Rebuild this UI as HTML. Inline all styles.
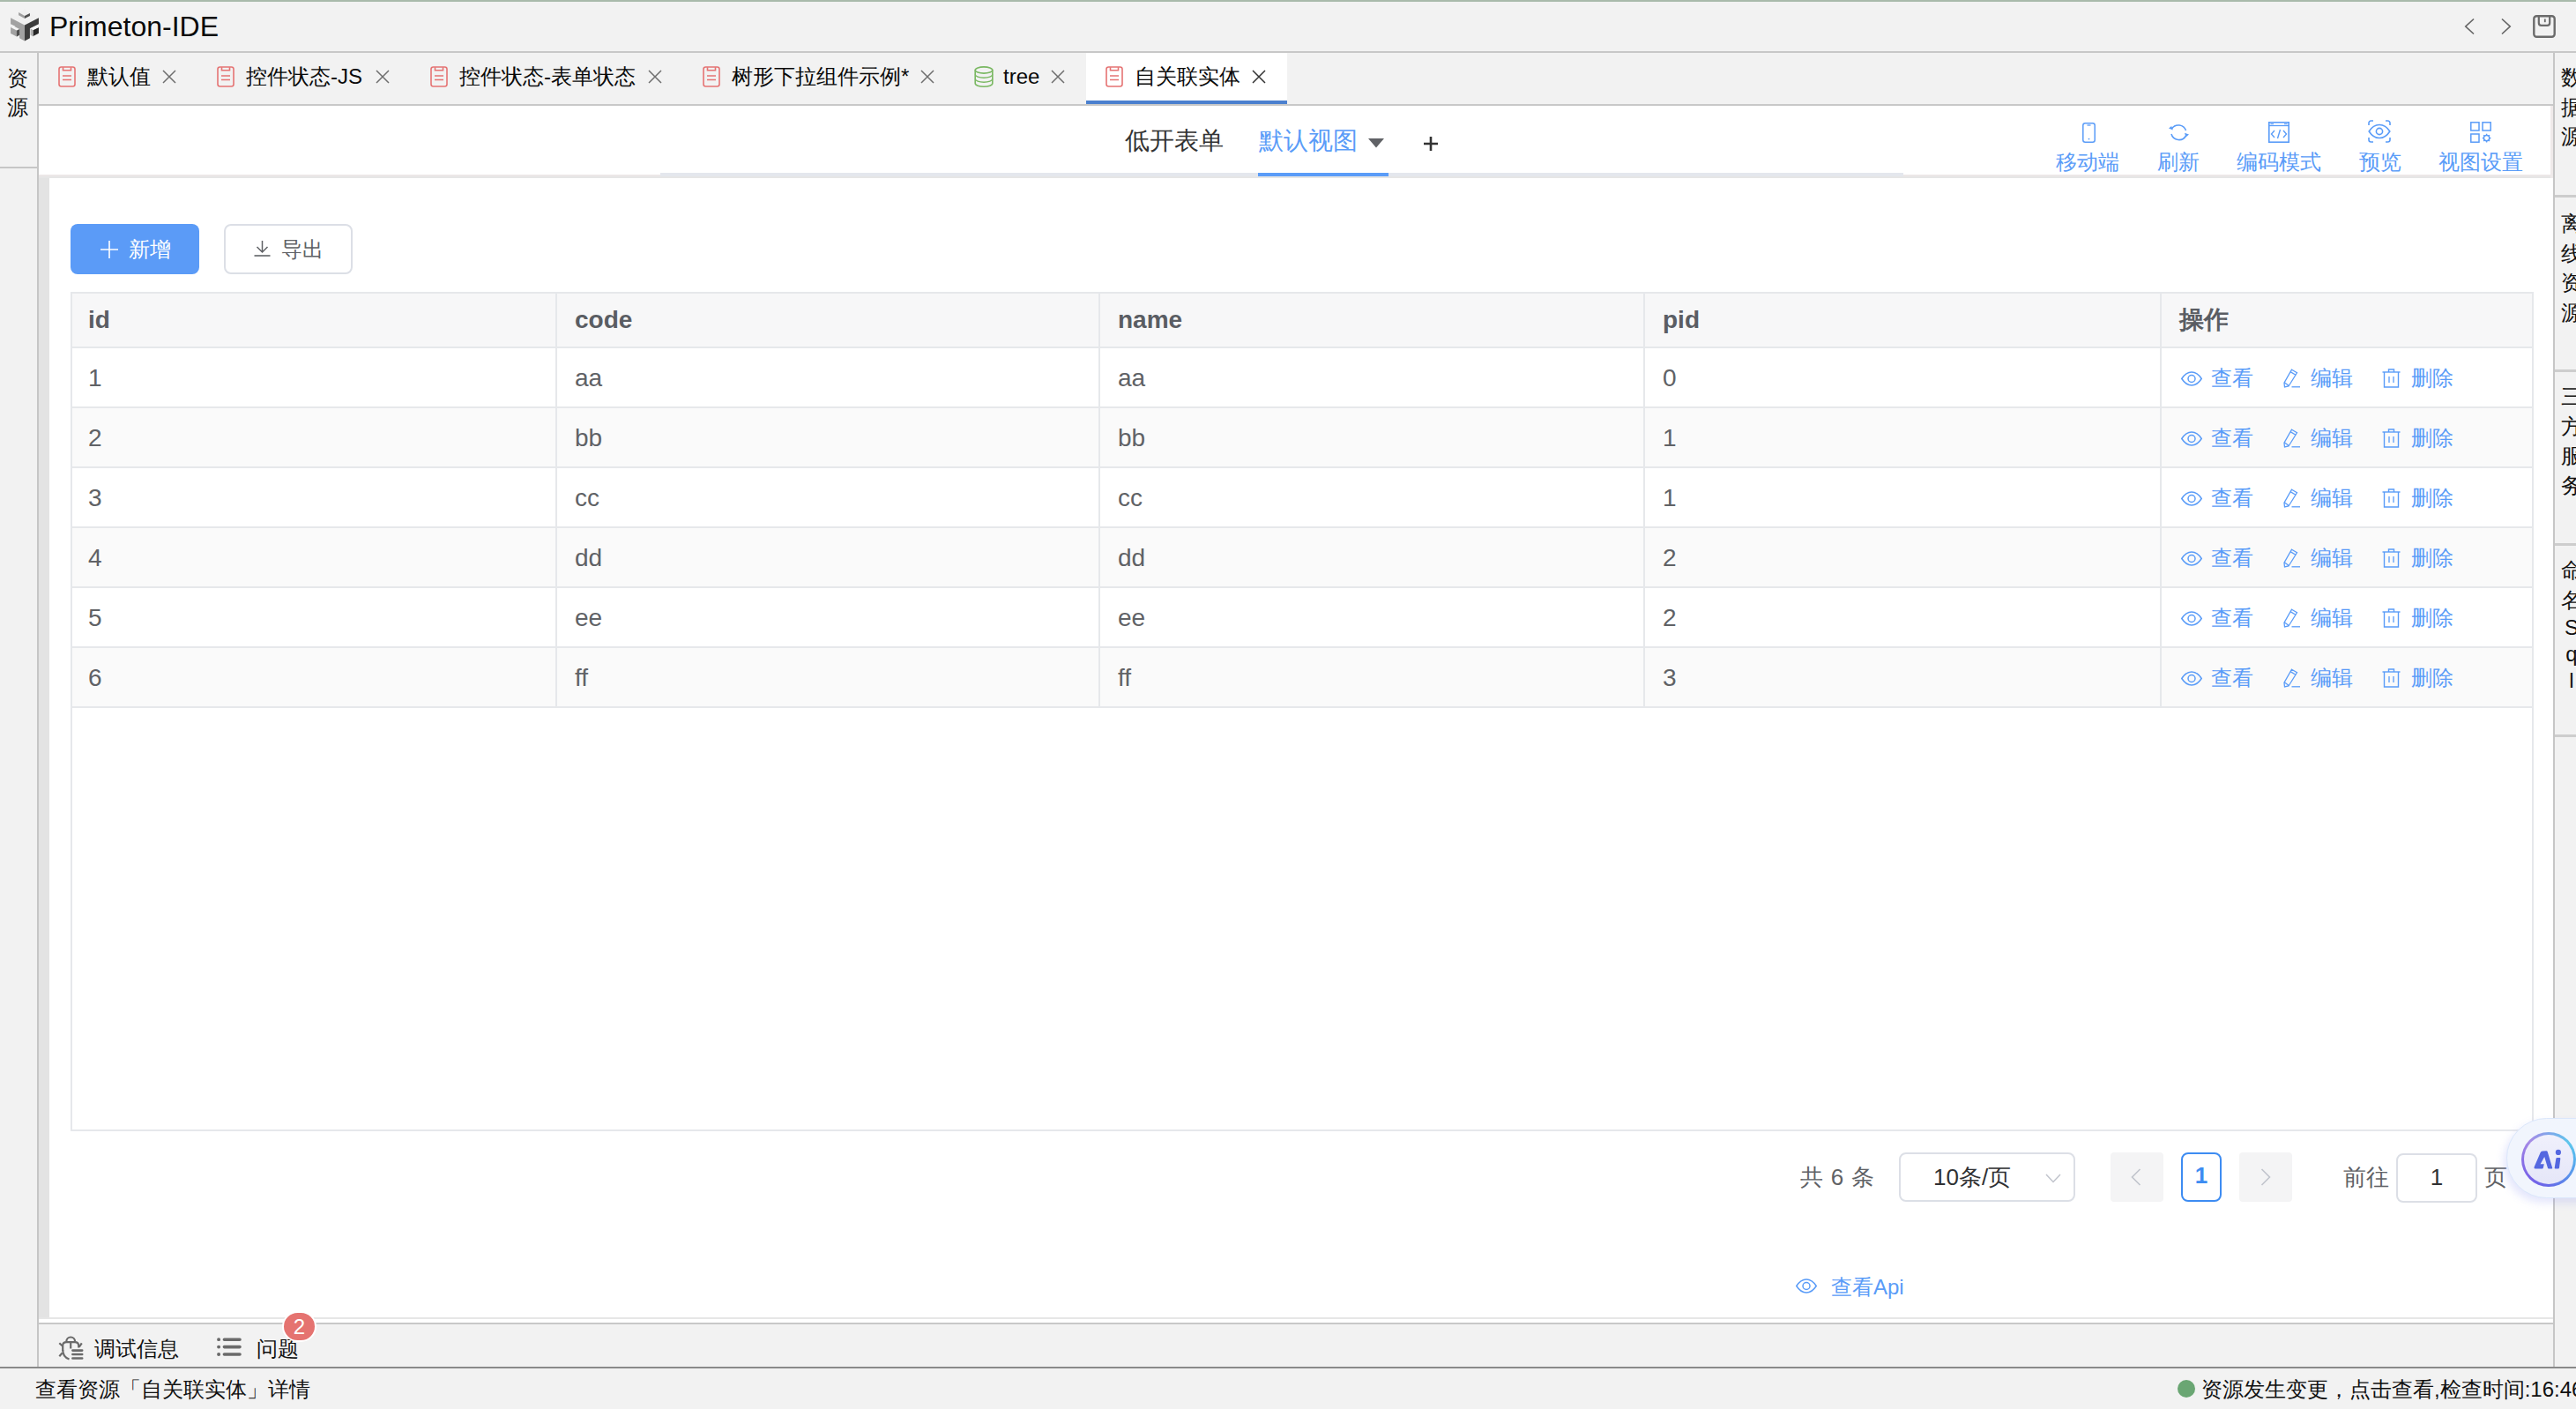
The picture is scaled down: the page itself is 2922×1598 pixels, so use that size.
<!DOCTYPE html>
<html><head><meta charset="utf-8">
<style>
*{box-sizing:border-box;margin:0;padding:0}
html,body{width:2922px;height:1598px;overflow:hidden;background:#f2f2f2}
body{font-family:"Liberation Sans",sans-serif;position:relative;color:#000}
.a{position:absolute;white-space:nowrap}
svg{display:block}
/* title bar */
#topline{left:0;top:0;width:2922px;height:2px;background:#a9baab}
#title{left:0;top:2px;width:2922px;height:56px;background:#f2f2f2}
#titleborder{left:0;top:58px;width:2922px;height:2px;background:#c8c8c8}
#apptitle{left:56px;top:13px;font-size:32px;line-height:34px;color:#0a0a0a}
/* sidebars */
#lsb{left:0;top:60px;width:42px;height:1490px;background:#f2f2f2}
#lsbb{left:42px;top:60px;width:2px;height:1490px;background:#c6c6c6}
.vt{font-size:24px;line-height:33px;color:#111;white-space:normal;width:26px}
#rsbb{left:2896px;top:60px;width:2px;height:1490px;background:#c6c6c6}
.rsep{left:2898px;width:24px;height:3px;background:#cdcdcd}
/* tabs */
#tabbar{left:44px;top:60px;width:2852px;height:58px;background:#f2f2f2}
#tabbarb{left:44px;top:118px;width:2852px;height:2px;background:#c8c8c8}
.tab{top:60px;height:58px}
.tab .ti{position:absolute;top:15px}
.tab .tt{position:absolute;top:14px;font-size:24px;line-height:30px;color:#0a0a0a}
.tab .tx{position:absolute;top:19px}
#acttab{left:1232px;top:60px;width:228px;height:58px;background:#fff}
#acttabu{left:1232px;top:114px;width:228px;height:4px;background:#4b80cf}
/* header */
#hdr{left:44px;top:120px;width:2852px;height:82px;background:#fff}
#hdrline{left:44px;top:198px;width:2850px;height:4px;background:#e6e6e6;border-top:2px solid #ece7e7}
#hdrrb{left:2893px;top:120px;width:3px;height:82px;background:#efeaea}
#navline{left:749px;top:196px;width:1410px;height:4px;background:#e4e7ed}
#navact{left:1427px;top:196px;width:148px;height:4px;background:#5a9cf8}
.st{font-size:28px;line-height:32px}
.tbl{font-size:24px;line-height:28px;color:#5a9cf8}
/* content */
#strip{left:44px;top:202px;width:12px;height:1292px;background:#e3e3e3}
#content{left:56px;top:202px;width:2840px;height:1292px;background:#fff}
#cbot{left:44px;top:1494px;width:2852px;height:6px;background:#fff;border-top:2px solid #e6e6e6}
#cbot2{left:44px;top:1496px;width:2852px;height:2px;background:#fafafa}
/* buttons */
#btnadd{left:80px;top:254px;width:146px;height:57px;background:#5b9bf7;border-radius:8px}
#btnexp{left:254px;top:254px;width:146px;height:57px;background:#fff;border:2px solid #dcdfe6;border-radius:8px}
.btxt{font-size:24px;line-height:28px}
/* table */
#table{left:80px;top:331px;width:2794px;height:952px;border:2px solid #e6e8eb;background:#fff}
.row{position:absolute;left:0;width:2790px;height:68px;border-bottom:2px solid #e6e8eb}
.hrow{height:62px;background:#f7f7f8}
.even{background:#fafafa}
.cell{position:absolute;top:0;height:100%}
.cd{position:absolute;top:0;width:2px;height:100%;background:#e6e8eb}
.ct{position:absolute;font-size:28px;line-height:32px;color:#606266}
.th{font-weight:bold;color:#5a5d63}
.act{position:absolute;font-size:24px;line-height:28px;color:#5a9cf8}
/* pagination */
.pg{font-size:26px;line-height:30px;color:#606266}
/* bottom */
#bpb{left:44px;top:1500px;width:2852px;height:2px;background:#c8c8c8}
#bp{left:44px;top:1502px;width:2852px;height:48px;background:#f2f2f2}
#sbb{left:0;top:1550px;width:2922px;height:2px;background:#8a8a8a}
#sb{left:0;top:1552px;width:2922px;height:46px;background:#f2f2f2}
</style></head><body>
<div class="a" id="topline"></div>
<div class="a" id="title"></div>
<div class="a" id="titleborder"></div>
<div class="a" id="apptitle">Primeton-IDE</div>

<div class="a" id="lsb"></div>
<div class="a" id="lsbb"></div>
<div class="a" id="rsbb"></div>


<!-- logo -->
<div class="a" style="left:8px;top:8px;width:44px;height:44px">
<svg width="44" height="44" viewBox="0 0 1409 1409">
<polygon points="130,390 640,120 1150,390 640,660" fill="#f0f0f0"/>
<polygon points="130,390 640,660 640,1230 450,1130 450,1020 350,1075 130,960 130,740 300,700 130,620" fill="#a2a2a2"/>
<polygon points="350,850 450,800 450,1020 350,1075" fill="#505050"/>
<polygon points="130,740 240,690 450,800 350,850" fill="#f5f5f5"/>
<polygon points="640,660 1150,390 1150,620 830,780 830,1130 640,1230" fill="#3c3c3c"/>
<polygon points="850,780 950,830 950,1075 850,1020" fill="#b0b0b0"/>
<polygon points="950,830 1150,740 1150,950 950,1060" fill="#262626"/>
<polygon points="850,780 1050,690 1150,740 950,830" fill="#f7f7f7"/>
<polygon points="420,195 640,90 830,225 640,320" fill="#efefef"/>
<polygon points="420,195 640,320 640,420 420,300" fill="#9e9e9e"/>
<polygon points="640,320 830,225 830,320 640,420" fill="#4e4e4e"/>
</svg></div>
<!-- title right icons -->
<div class="a" style="left:2795px;top:20px"><svg width="12" height="20" viewBox="0 0 12 20"><path d="M11 1.5 L1.8 10 L11 18.5" fill="none" stroke="#666" stroke-width="1.7"/></svg></div>
<div class="a" style="left:2837px;top:20px"><svg width="12" height="20" viewBox="0 0 12 20"><path d="M1 1.5 L10.2 10 L1 18.5" fill="none" stroke="#666" stroke-width="1.7"/></svg></div>
<div class="a" style="left:2873px;top:17px"><svg width="26" height="26" viewBox="0 0 26 26"><rect x="1.3" y="1.3" width="23.4" height="23.4" rx="3" fill="none" stroke="#6b6b6b" stroke-width="2.4"/><path d="M6.8 1.5 V9 Q6.8 11.8 9.6 11.8 H16.4 Q19.2 11.8 19.2 9 V1.5" fill="none" stroke="#6b6b6b" stroke-width="2.2"/><path d="M13.8 4.5 V8.2" stroke="#6b6b6b" stroke-width="1.8"/></svg></div>

<!-- left sidebar text -->
<div class="a vt" style="left:8px;top:72px">资<br>源</div>
<div class="a" style="left:0;top:189px;width:42px;height:2px;background:#c6c6c6"></div>

<!-- right sidebar -->
<div class="a" style="left:2898px;top:60px;width:24px;height:1490px;background:#f2f2f2;overflow:hidden"><div class="a" style="left:7px;top:11px;width:26px"><div style="height:33.5px;line-height:33.5px;font-size:24px;color:#111;text-align:left;width:24px">数</div><div style="height:33.5px;line-height:33.5px;font-size:24px;color:#111;text-align:left;width:24px">据</div><div style="height:33.5px;line-height:33.5px;font-size:24px;color:#111;text-align:left;width:24px">源</div></div><div class="a" style="left:0;top:161px;width:24px;height:3px;background:#cdcdcd"></div><div class="a" style="left:7px;top:177px;width:26px"><div style="height:33.5px;line-height:33.5px;font-size:24px;color:#111;text-align:left;width:24px">离</div><div style="height:33.5px;line-height:33.5px;font-size:24px;color:#111;text-align:left;width:24px">线</div><div style="height:33.5px;line-height:33.5px;font-size:24px;color:#111;text-align:left;width:24px">资</div><div style="height:33.5px;line-height:33.5px;font-size:24px;color:#111;text-align:left;width:24px">源</div></div><div class="a" style="left:0;top:359px;width:24px;height:3px;background:#cdcdcd"></div><div class="a" style="left:7px;top:373px;width:26px"><div style="height:33.5px;line-height:33.5px;font-size:24px;color:#111;text-align:left;width:24px">三</div><div style="height:33.5px;line-height:33.5px;font-size:24px;color:#111;text-align:left;width:24px">方</div><div style="height:33.5px;line-height:33.5px;font-size:24px;color:#111;text-align:left;width:24px">服</div><div style="height:33.5px;line-height:33.5px;font-size:24px;color:#111;text-align:left;width:24px">务</div></div><div class="a" style="left:0;top:556px;width:24px;height:3px;background:#cdcdcd"></div><div class="a" style="left:7px;top:570px;width:26px"><div style="height:33.5px;line-height:33.5px;font-size:24px;color:#111;text-align:left;width:24px">命</div><div style="height:33.5px;line-height:33.5px;font-size:24px;color:#111;text-align:left;width:24px">名</div><div style="height:30px;line-height:30px;font-size:24px;color:#111;text-align:center;width:24px">S</div><div style="height:30px;line-height:30px;font-size:24px;color:#111;text-align:center;width:24px">q</div><div style="height:30px;line-height:30px;font-size:24px;color:#111;text-align:center;width:24px">l</div></div><div class="a" style="left:0;top:773px;width:24px;height:3px;background:#cdcdcd"></div></div>
<div class="a" id="tabbar"></div>
<div class="a" id="tabbarb"></div>

<div class="a" id="acttab"></div><div class="a" id="acttabu"></div>
<div class="a" style="left:66px;top:75px"><svg width="20" height="24" viewBox="0 0 20 24"><rect x="1" y="1" width="18" height="22" rx="2.5" fill="none" stroke="#e57373" stroke-width="1.6"/><path d="M5.5 1.2 V4.8 H14.5 V1.2" fill="none" stroke="#e57373" stroke-width="1.6"/><path d="M5 11 H15 M5 15.5 H15" stroke="#e57373" stroke-width="1.6"/></svg></div><div class="a tt" style="left:99px;top:72px;font-size:24px;line-height:30px;color:#0a0a0a">默认值</div><div class="a" style="left:184px;top:79px"><svg width="16" height="16" viewBox="0 0 16 16"><path d="M1 1 L15 15 M15 1 L1 15" stroke="#6e6e6e" stroke-width="1.5"/></svg></div>
<div class="a" style="left:246px;top:75px"><svg width="20" height="24" viewBox="0 0 20 24"><rect x="1" y="1" width="18" height="22" rx="2.5" fill="none" stroke="#e57373" stroke-width="1.6"/><path d="M5.5 1.2 V4.8 H14.5 V1.2" fill="none" stroke="#e57373" stroke-width="1.6"/><path d="M5 11 H15 M5 15.5 H15" stroke="#e57373" stroke-width="1.6"/></svg></div><div class="a tt" style="left:279px;top:72px;font-size:24px;line-height:30px;color:#0a0a0a">控件状态-JS</div><div class="a" style="left:426px;top:79px"><svg width="16" height="16" viewBox="0 0 16 16"><path d="M1 1 L15 15 M15 1 L1 15" stroke="#6e6e6e" stroke-width="1.5"/></svg></div>
<div class="a" style="left:488px;top:75px"><svg width="20" height="24" viewBox="0 0 20 24"><rect x="1" y="1" width="18" height="22" rx="2.5" fill="none" stroke="#e57373" stroke-width="1.6"/><path d="M5.5 1.2 V4.8 H14.5 V1.2" fill="none" stroke="#e57373" stroke-width="1.6"/><path d="M5 11 H15 M5 15.5 H15" stroke="#e57373" stroke-width="1.6"/></svg></div><div class="a tt" style="left:521px;top:72px;font-size:24px;line-height:30px;color:#0a0a0a">控件状态-表单状态</div><div class="a" style="left:735px;top:79px"><svg width="16" height="16" viewBox="0 0 16 16"><path d="M1 1 L15 15 M15 1 L1 15" stroke="#6e6e6e" stroke-width="1.5"/></svg></div>
<div class="a" style="left:797px;top:75px"><svg width="20" height="24" viewBox="0 0 20 24"><rect x="1" y="1" width="18" height="22" rx="2.5" fill="none" stroke="#e57373" stroke-width="1.6"/><path d="M5.5 1.2 V4.8 H14.5 V1.2" fill="none" stroke="#e57373" stroke-width="1.6"/><path d="M5 11 H15 M5 15.5 H15" stroke="#e57373" stroke-width="1.6"/></svg></div><div class="a tt" style="left:830px;top:72px;font-size:24px;line-height:30px;color:#0a0a0a">树形下拉组件示例*</div><div class="a" style="left:1044px;top:79px"><svg width="16" height="16" viewBox="0 0 16 16"><path d="M1 1 L15 15 M15 1 L1 15" stroke="#6e6e6e" stroke-width="1.5"/></svg></div>
<div class="a" style="left:1105px;top:75px"><svg width="22" height="24" viewBox="0 0 22 24"><ellipse cx="11" cy="4.5" rx="9.8" ry="3.6" fill="none" stroke="#7ab862" stroke-width="1.6"/><path d="M1.2 4.5 V19.5 C1.2 21.6 5.6 23.2 11 23.2 C16.4 23.2 20.8 21.6 20.8 19.5 V4.5" fill="none" stroke="#7ab862" stroke-width="1.6"/><path d="M1.2 9.5 C1.2 11.6 5.6 13.2 11 13.2 C16.4 13.2 20.8 11.6 20.8 9.5 M1.2 14.5 C1.2 16.6 5.6 18.2 11 18.2 C16.4 18.2 20.8 16.6 20.8 14.5" fill="none" stroke="#7ab862" stroke-width="1.4"/></svg></div><div class="a tt" style="left:1138px;top:72px;font-size:24px;line-height:30px;color:#0a0a0a">tree</div><div class="a" style="left:1192px;top:79px"><svg width="16" height="16" viewBox="0 0 16 16"><path d="M1 1 L15 15 M15 1 L1 15" stroke="#6e6e6e" stroke-width="1.5"/></svg></div>
<div class="a" style="left:1254px;top:75px"><svg width="20" height="24" viewBox="0 0 20 24"><rect x="1" y="1" width="18" height="22" rx="2.5" fill="none" stroke="#e57373" stroke-width="1.6"/><path d="M5.5 1.2 V4.8 H14.5 V1.2" fill="none" stroke="#e57373" stroke-width="1.6"/><path d="M5 11 H15 M5 15.5 H15" stroke="#e57373" stroke-width="1.6"/></svg></div><div class="a tt" style="left:1287px;top:72px;font-size:24px;line-height:30px;color:#0a0a0a">自关联实体</div><div class="a" style="left:1420px;top:79px"><svg width="16" height="16" viewBox="0 0 16 16"><path d="M1 1 L15 15 M15 1 L1 15" stroke="#333" stroke-width="1.5"/></svg></div>
<div class="a" id="hdr"></div>
<div class="a" id="hdrline"></div>
<div class="a" id="hdrrb"></div>
<div class="a" id="navline"></div>
<div class="a" id="navact"></div>
<div class="a st" style="left:1276px;top:144px;color:#333">低开表单</div>
<div class="a st" style="left:1428px;top:144px;color:#5a9cf8">默认视图</div>
<div class="a" style="left:1552px;top:157px"><svg width="18" height="11" viewBox="0 0 18 11"><path d="M0 0 H18 L9 10.5 Z" fill="#606266"/></svg></div>
<div class="a" style="left:1615px;top:155px"><svg width="16" height="16" viewBox="0 0 16 16"><path d="M8 0 V16 M0 8 H16" stroke="#333" stroke-width="2.6"/></svg></div>

<!-- toolbar -->
<div class="a" style="left:2362px;top:139px"><svg width="15" height="23" viewBox="0 0 15 23"><rect x="0.8" y="0.8" width="13.4" height="21.4" rx="2.5" fill="none" stroke="#5a9cf8" stroke-width="1.5"/><path d="M5.5 3 H9.5" stroke="#5a9cf8" stroke-width="1.3"/><circle cx="7.5" cy="18.6" r="0.9" fill="#5a9cf8"/></svg></div>
<div class="a tbl" style="left:2332px;top:170px">移动端</div>
<div class="a" style="left:2459px;top:140px"><svg width="25" height="21" viewBox="0 0 25 21"><path d="M4.5 6 A9 9 0 0 1 20.5 8" fill="none" stroke="#5a9cf8" stroke-width="1.6"/><path d="M20.5 14 A9 9 0 0 1 4 12" fill="none" stroke="#5a9cf8" stroke-width="1.6"/><path d="M1 5.5 L4.2 3 L5.8 7.5 Z" fill="#5a9cf8"/><path d="M24 12.5 L20.5 15.5 L19 10.8 Z" fill="#5a9cf8"/></svg></div>
<div class="a tbl" style="left:2447px;top:170px">刷新</div>
<div class="a" style="left:2573px;top:138px"><svg width="24" height="24" viewBox="0 0 24 24"><rect x="0.8" y="0.8" width="22.4" height="22.4" fill="none" stroke="#5a9cf8" stroke-width="1.6"/><path d="M0.8 4.5 H23.2" stroke="#5a9cf8" stroke-width="1.3"/><path d="M2.5 2.6 H6 M18 2.6 H21.5" stroke="#5a9cf8" stroke-width="1"/><path d="M7 10 L3.5 14 L7 18 M17 10 L20.5 14 L17 18 M13.5 9 L10.5 19" fill="none" stroke="#5a9cf8" stroke-width="1.4"/></svg></div>
<div class="a tbl" style="left:2537px;top:170px">编码模式</div>
<div class="a" style="left:2686px;top:136px"><svg width="26" height="26" viewBox="0 0 26 26"><path d="M1 6 V3.5 A2.5 2.5 0 0 1 3.5 1 H6 M20 1 H22.5 A2.5 2.5 0 0 1 25 3.5 V6 M25 20 V22.5 A2.5 2.5 0 0 1 22.5 25 H20 M6 25 H3.5 A2.5 2.5 0 0 1 1 22.5 V20" fill="none" stroke="#5a9cf8" stroke-width="1.6"/><path d="M1.2 13 C5 7 9 5.5 13 5.5 C17 5.5 21 7 24.8 13 C21 19 17 20.5 13 20.5 C9 20.5 5 19 1.2 13 Z" fill="none" stroke="#5a9cf8" stroke-width="1.6"/><circle cx="13" cy="13" r="3.6" fill="none" stroke="#5a9cf8" stroke-width="1.6"/></svg></div>
<div class="a tbl" style="left:2676px;top:170px">预览</div>
<div class="a" style="left:2802px;top:138px"><svg width="24" height="24" viewBox="0 0 24 24"><rect x="0.8" y="0.8" width="9.2" height="9.2" fill="none" stroke="#5a9cf8" stroke-width="1.5"/><rect x="14" y="0.8" width="9.2" height="9.2" fill="none" stroke="#5a9cf8" stroke-width="1.5"/><rect x="0.8" y="14" width="9.2" height="9.2" fill="none" stroke="#5a9cf8" stroke-width="1.5"/><circle cx="18.6" cy="18.6" r="3.2" fill="none" stroke="#5a9cf8" stroke-width="1.5"/><path d="M18.6 13.8 V15.2 M18.6 22 V23.4 M13.8 18.6 H15.2 M22 18.6 H23.4 M15.2 15.2 L16.2 16.2 M21 21 L22 22 M22 15.2 L21 16.2 M16.2 21 L15.2 22" stroke="#5a9cf8" stroke-width="1.4"/></svg></div>
<div class="a tbl" style="left:2766px;top:170px">视图设置</div>

<div class="a" id="strip"></div>
<div class="a" id="content"></div>
<div class="a" id="cbot"></div>
<div class="a" id="btnadd"></div>
<div class="a" style="left:114px;top:273px"><svg width="20" height="20" viewBox="0 0 20 20"><path d="M10 0 V20 M0 10 H20" stroke="#fff" stroke-width="1.6"/></svg></div>
<div class="a btxt" style="left:146px;top:269px;color:#fff">新增</div>
<div class="a" id="btnexp"></div>
<div class="a" style="left:288px;top:273px"><svg width="19" height="18" viewBox="0 0 19 18"><path d="M9.5 0 V12.5 M3.5 7 L9.5 13 L15.5 7" fill="none" stroke="#606266" stroke-width="1.5"/><path d="M0.5 17 H18.5" stroke="#606266" stroke-width="1.6"/></svg></div>
<div class="a btxt" style="left:319px;top:269px;color:#606266">导出</div>
<div class="a" id="table"><div class="row hrow" style="top:0px;height:62px"><div class="cd" style="left:548px"></div><div class="cd" style="left:1164px"></div><div class="cd" style="left:1782px"></div><div class="cd" style="left:2368px"></div><div class="ct th" style="left:18px;top:14px">id</div><div class="ct th" style="left:570px;top:14px">code</div><div class="ct th" style="left:1186px;top:14px">name</div><div class="ct th" style="left:1804px;top:14px">pid</div><div class="ct th" style="left:2390px;top:14px">操作</div></div><div class="row " style="top:62px;height:68px"><div class="cd" style="left:548px"></div><div class="cd" style="left:1164px"></div><div class="cd" style="left:1782px"></div><div class="cd" style="left:2368px"></div><div class="ct" style="left:18px;top:18px">1</div><div class="ct" style="left:570px;top:18px">aa</div><div class="ct" style="left:1186px;top:18px">aa</div><div class="ct" style="left:1804px;top:18px">0</div><div class="a" style="left:2392px;top:26px"><svg width="24" height="17" viewBox="0 0 24 17"><path d="M0.8 8.5 C4 3.5 8 1 12 1 C16 1 20 3.5 23.2 8.5 C20 13.5 16 16 12 16 C8 16 4 13.5 0.8 8.5 Z" fill="none" stroke="#5a9cf8" stroke-width="1.5"/><circle cx="12" cy="8.5" r="4" fill="none" stroke="#5a9cf8" stroke-width="1.5"/></svg></div><div class="act" style="left:2426px;top:20px">查看</div><div class="a" style="left:2508px;top:23px"><svg width="20" height="22" viewBox="0 0 20 22"><path d="M9.5 1.2 L15.5 4.8 L6 20 L1.5 21 L1 16.2 Z M1.2 15.8 L6.3 19.5 M8 3.6 L14 7.2" fill="none" stroke="#5a9cf8" stroke-width="1.3"/><path d="M9.5 20.8 H19" stroke="#5a9cf8" stroke-width="1.3"/></svg></div><div class="act" style="left:2539px;top:20px">编辑</div><div class="a" style="left:2620px;top:23px"><svg width="21" height="22" viewBox="0 0 21 22"><path d="M0.5 4 H20.5" stroke="#5a9cf8" stroke-width="1.4"/><path d="M7.5 4 V1 H13.5 V4" fill="none" stroke="#5a9cf8" stroke-width="1.4"/><path d="M2.5 4 V21 H18.5 V4" fill="none" stroke="#5a9cf8" stroke-width="1.4"/><path d="M8 9 V16 M13 9 V16" stroke="#5a9cf8" stroke-width="1.3"/></svg></div><div class="act" style="left:2653px;top:20px">删除</div></div><div class="row even" style="top:130px;height:68px"><div class="cd" style="left:548px"></div><div class="cd" style="left:1164px"></div><div class="cd" style="left:1782px"></div><div class="cd" style="left:2368px"></div><div class="ct" style="left:18px;top:18px">2</div><div class="ct" style="left:570px;top:18px">bb</div><div class="ct" style="left:1186px;top:18px">bb</div><div class="ct" style="left:1804px;top:18px">1</div><div class="a" style="left:2392px;top:26px"><svg width="24" height="17" viewBox="0 0 24 17"><path d="M0.8 8.5 C4 3.5 8 1 12 1 C16 1 20 3.5 23.2 8.5 C20 13.5 16 16 12 16 C8 16 4 13.5 0.8 8.5 Z" fill="none" stroke="#5a9cf8" stroke-width="1.5"/><circle cx="12" cy="8.5" r="4" fill="none" stroke="#5a9cf8" stroke-width="1.5"/></svg></div><div class="act" style="left:2426px;top:20px">查看</div><div class="a" style="left:2508px;top:23px"><svg width="20" height="22" viewBox="0 0 20 22"><path d="M9.5 1.2 L15.5 4.8 L6 20 L1.5 21 L1 16.2 Z M1.2 15.8 L6.3 19.5 M8 3.6 L14 7.2" fill="none" stroke="#5a9cf8" stroke-width="1.3"/><path d="M9.5 20.8 H19" stroke="#5a9cf8" stroke-width="1.3"/></svg></div><div class="act" style="left:2539px;top:20px">编辑</div><div class="a" style="left:2620px;top:23px"><svg width="21" height="22" viewBox="0 0 21 22"><path d="M0.5 4 H20.5" stroke="#5a9cf8" stroke-width="1.4"/><path d="M7.5 4 V1 H13.5 V4" fill="none" stroke="#5a9cf8" stroke-width="1.4"/><path d="M2.5 4 V21 H18.5 V4" fill="none" stroke="#5a9cf8" stroke-width="1.4"/><path d="M8 9 V16 M13 9 V16" stroke="#5a9cf8" stroke-width="1.3"/></svg></div><div class="act" style="left:2653px;top:20px">删除</div></div><div class="row " style="top:198px;height:68px"><div class="cd" style="left:548px"></div><div class="cd" style="left:1164px"></div><div class="cd" style="left:1782px"></div><div class="cd" style="left:2368px"></div><div class="ct" style="left:18px;top:18px">3</div><div class="ct" style="left:570px;top:18px">cc</div><div class="ct" style="left:1186px;top:18px">cc</div><div class="ct" style="left:1804px;top:18px">1</div><div class="a" style="left:2392px;top:26px"><svg width="24" height="17" viewBox="0 0 24 17"><path d="M0.8 8.5 C4 3.5 8 1 12 1 C16 1 20 3.5 23.2 8.5 C20 13.5 16 16 12 16 C8 16 4 13.5 0.8 8.5 Z" fill="none" stroke="#5a9cf8" stroke-width="1.5"/><circle cx="12" cy="8.5" r="4" fill="none" stroke="#5a9cf8" stroke-width="1.5"/></svg></div><div class="act" style="left:2426px;top:20px">查看</div><div class="a" style="left:2508px;top:23px"><svg width="20" height="22" viewBox="0 0 20 22"><path d="M9.5 1.2 L15.5 4.8 L6 20 L1.5 21 L1 16.2 Z M1.2 15.8 L6.3 19.5 M8 3.6 L14 7.2" fill="none" stroke="#5a9cf8" stroke-width="1.3"/><path d="M9.5 20.8 H19" stroke="#5a9cf8" stroke-width="1.3"/></svg></div><div class="act" style="left:2539px;top:20px">编辑</div><div class="a" style="left:2620px;top:23px"><svg width="21" height="22" viewBox="0 0 21 22"><path d="M0.5 4 H20.5" stroke="#5a9cf8" stroke-width="1.4"/><path d="M7.5 4 V1 H13.5 V4" fill="none" stroke="#5a9cf8" stroke-width="1.4"/><path d="M2.5 4 V21 H18.5 V4" fill="none" stroke="#5a9cf8" stroke-width="1.4"/><path d="M8 9 V16 M13 9 V16" stroke="#5a9cf8" stroke-width="1.3"/></svg></div><div class="act" style="left:2653px;top:20px">删除</div></div><div class="row even" style="top:266px;height:68px"><div class="cd" style="left:548px"></div><div class="cd" style="left:1164px"></div><div class="cd" style="left:1782px"></div><div class="cd" style="left:2368px"></div><div class="ct" style="left:18px;top:18px">4</div><div class="ct" style="left:570px;top:18px">dd</div><div class="ct" style="left:1186px;top:18px">dd</div><div class="ct" style="left:1804px;top:18px">2</div><div class="a" style="left:2392px;top:26px"><svg width="24" height="17" viewBox="0 0 24 17"><path d="M0.8 8.5 C4 3.5 8 1 12 1 C16 1 20 3.5 23.2 8.5 C20 13.5 16 16 12 16 C8 16 4 13.5 0.8 8.5 Z" fill="none" stroke="#5a9cf8" stroke-width="1.5"/><circle cx="12" cy="8.5" r="4" fill="none" stroke="#5a9cf8" stroke-width="1.5"/></svg></div><div class="act" style="left:2426px;top:20px">查看</div><div class="a" style="left:2508px;top:23px"><svg width="20" height="22" viewBox="0 0 20 22"><path d="M9.5 1.2 L15.5 4.8 L6 20 L1.5 21 L1 16.2 Z M1.2 15.8 L6.3 19.5 M8 3.6 L14 7.2" fill="none" stroke="#5a9cf8" stroke-width="1.3"/><path d="M9.5 20.8 H19" stroke="#5a9cf8" stroke-width="1.3"/></svg></div><div class="act" style="left:2539px;top:20px">编辑</div><div class="a" style="left:2620px;top:23px"><svg width="21" height="22" viewBox="0 0 21 22"><path d="M0.5 4 H20.5" stroke="#5a9cf8" stroke-width="1.4"/><path d="M7.5 4 V1 H13.5 V4" fill="none" stroke="#5a9cf8" stroke-width="1.4"/><path d="M2.5 4 V21 H18.5 V4" fill="none" stroke="#5a9cf8" stroke-width="1.4"/><path d="M8 9 V16 M13 9 V16" stroke="#5a9cf8" stroke-width="1.3"/></svg></div><div class="act" style="left:2653px;top:20px">删除</div></div><div class="row " style="top:334px;height:68px"><div class="cd" style="left:548px"></div><div class="cd" style="left:1164px"></div><div class="cd" style="left:1782px"></div><div class="cd" style="left:2368px"></div><div class="ct" style="left:18px;top:18px">5</div><div class="ct" style="left:570px;top:18px">ee</div><div class="ct" style="left:1186px;top:18px">ee</div><div class="ct" style="left:1804px;top:18px">2</div><div class="a" style="left:2392px;top:26px"><svg width="24" height="17" viewBox="0 0 24 17"><path d="M0.8 8.5 C4 3.5 8 1 12 1 C16 1 20 3.5 23.2 8.5 C20 13.5 16 16 12 16 C8 16 4 13.5 0.8 8.5 Z" fill="none" stroke="#5a9cf8" stroke-width="1.5"/><circle cx="12" cy="8.5" r="4" fill="none" stroke="#5a9cf8" stroke-width="1.5"/></svg></div><div class="act" style="left:2426px;top:20px">查看</div><div class="a" style="left:2508px;top:23px"><svg width="20" height="22" viewBox="0 0 20 22"><path d="M9.5 1.2 L15.5 4.8 L6 20 L1.5 21 L1 16.2 Z M1.2 15.8 L6.3 19.5 M8 3.6 L14 7.2" fill="none" stroke="#5a9cf8" stroke-width="1.3"/><path d="M9.5 20.8 H19" stroke="#5a9cf8" stroke-width="1.3"/></svg></div><div class="act" style="left:2539px;top:20px">编辑</div><div class="a" style="left:2620px;top:23px"><svg width="21" height="22" viewBox="0 0 21 22"><path d="M0.5 4 H20.5" stroke="#5a9cf8" stroke-width="1.4"/><path d="M7.5 4 V1 H13.5 V4" fill="none" stroke="#5a9cf8" stroke-width="1.4"/><path d="M2.5 4 V21 H18.5 V4" fill="none" stroke="#5a9cf8" stroke-width="1.4"/><path d="M8 9 V16 M13 9 V16" stroke="#5a9cf8" stroke-width="1.3"/></svg></div><div class="act" style="left:2653px;top:20px">删除</div></div><div class="row even" style="top:402px;height:68px"><div class="cd" style="left:548px"></div><div class="cd" style="left:1164px"></div><div class="cd" style="left:1782px"></div><div class="cd" style="left:2368px"></div><div class="ct" style="left:18px;top:18px">6</div><div class="ct" style="left:570px;top:18px">ff</div><div class="ct" style="left:1186px;top:18px">ff</div><div class="ct" style="left:1804px;top:18px">3</div><div class="a" style="left:2392px;top:26px"><svg width="24" height="17" viewBox="0 0 24 17"><path d="M0.8 8.5 C4 3.5 8 1 12 1 C16 1 20 3.5 23.2 8.5 C20 13.5 16 16 12 16 C8 16 4 13.5 0.8 8.5 Z" fill="none" stroke="#5a9cf8" stroke-width="1.5"/><circle cx="12" cy="8.5" r="4" fill="none" stroke="#5a9cf8" stroke-width="1.5"/></svg></div><div class="act" style="left:2426px;top:20px">查看</div><div class="a" style="left:2508px;top:23px"><svg width="20" height="22" viewBox="0 0 20 22"><path d="M9.5 1.2 L15.5 4.8 L6 20 L1.5 21 L1 16.2 Z M1.2 15.8 L6.3 19.5 M8 3.6 L14 7.2" fill="none" stroke="#5a9cf8" stroke-width="1.3"/><path d="M9.5 20.8 H19" stroke="#5a9cf8" stroke-width="1.3"/></svg></div><div class="act" style="left:2539px;top:20px">编辑</div><div class="a" style="left:2620px;top:23px"><svg width="21" height="22" viewBox="0 0 21 22"><path d="M0.5 4 H20.5" stroke="#5a9cf8" stroke-width="1.4"/><path d="M7.5 4 V1 H13.5 V4" fill="none" stroke="#5a9cf8" stroke-width="1.4"/><path d="M2.5 4 V21 H18.5 V4" fill="none" stroke="#5a9cf8" stroke-width="1.4"/><path d="M8 9 V16 M13 9 V16" stroke="#5a9cf8" stroke-width="1.3"/></svg></div><div class="act" style="left:2653px;top:20px">删除</div></div></div>
<div class="a pg" style="left:2042px;top:1320px;word-spacing:1.5px">共 6 条</div>
<div class="a" style="left:2154px;top:1307px;width:200px;height:56px;border:2px solid #dcdfe6;border-radius:8px;background:#fff"></div>
<div class="a pg" style="left:2193px;top:1320px;color:#303133">10条/页</div>
<div class="a" style="left:2320px;top:1331px"><svg width="18" height="11" viewBox="0 0 18 11"><path d="M1 1 L9 9.5 L17 1" fill="none" stroke="#c0c4cc" stroke-width="1.5"/></svg></div>
<div class="a" style="left:2394px;top:1307px;width:60px;height:56px;background:#f4f4f5;border-radius:4px"></div>
<div class="a" style="left:2417px;top:1325px"><svg width="12" height="20" viewBox="0 0 12 20"><path d="M10.5 1 L1.5 10 L10.5 19" fill="none" stroke="#c0c4cc" stroke-width="1.6"/></svg></div>
<div class="a" style="left:2474px;top:1307px;width:46px;height:56px;border:2px solid #3d8cf2;border-radius:8px;background:#fff"></div>
<div class="a" style="left:2474px;top:1318px;width:46px;text-align:center;font-size:26px;line-height:30px;font-weight:bold;color:#3d8cf2">1</div>
<div class="a" style="left:2540px;top:1307px;width:60px;height:56px;background:#f4f4f5;border-radius:4px"></div>
<div class="a" style="left:2564px;top:1325px"><svg width="12" height="20" viewBox="0 0 12 20"><path d="M1.5 1 L10.5 10 L1.5 19" fill="none" stroke="#c0c4cc" stroke-width="1.6"/></svg></div>
<div class="a pg" style="left:2658px;top:1320px">前往</div>
<div class="a" style="left:2718px;top:1308px;width:92px;height:56px;border:2px solid #dcdfe6;border-radius:8px;background:#fff"></div>
<div class="a pg" style="left:2718px;top:1320px;width:92px;text-align:center;color:#303133">1</div>
<div class="a pg" style="left:2818px;top:1320px">页</div>

<!-- api -->
<div class="a" style="left:2037px;top:1450px"><svg width="24" height="17" viewBox="0 0 24 17"><path d="M0.8 8.5 C4 3.5 8 1 12 1 C16 1 20 3.5 23.2 8.5 C20 13.5 16 16 12 16 C8 16 4 13.5 0.8 8.5 Z" fill="none" stroke="#5a9cf8" stroke-width="1.5"/><circle cx="12" cy="8.5" r="4" fill="none" stroke="#5a9cf8" stroke-width="1.5"/></svg></div>
<div class="a" style="left:2077px;top:1446px;font-size:24px;line-height:28px;color:#5a9cf8">查看Api</div>

<!-- AI bubble -->
<div class="a" style="left:2843px;top:1268px;width:140px;height:91px;border-radius:46px;background:#f1f5fd;border:1.5px solid #dbe7fb;box-shadow:-3px 5px 10px rgba(130,140,240,0.22)"></div>
<div class="a" style="left:2860px;top:1284px;width:62px;height:62px;border-radius:50%;background:conic-gradient(from 0deg,#7fa6ea 0deg,#5ec6ec 50deg,#57b2ee 90deg,#5a8cea 135deg,#6669e8 180deg,#7862e8 225deg,#8c72e6 270deg,#a78ce6 315deg,#7fa6ea 360deg)"></div>
<div class="a" style="left:2863px;top:1287px;width:56px;height:56px;border-radius:50%;background:linear-gradient(#f0f0fc,#e5e6f8)"></div>
<div class="a" style="left:2860px;top:1284px"><svg width="62" height="62" viewBox="0 0 62 62"><path d="M14.6 39.5 L21.6 23.2 Q22.2 21.6 24 21.5 L28.3 21.3 Q29.5 21.3 29.8 22.5 L35.2 40.6 Q35.4 41.6 34.4 41.6 L31 41.6 Q30.2 41.6 30 40.8 L26.2 28 L21.6 36.2 H25.8 L24.8 40.6 Q24.6 41.6 23.6 41.6 H15.6 Q14 41.6 14.6 39.5 Z" fill="#5467e0"/><circle cx="41.9" cy="22.9" r="3.1" fill="#5467e0"/><path d="M40.6 29.1 H43.4 Q44.5 29.1 44.3 30.2 L43 40.5 Q42.8 41.6 41.8 41.6 H38.6 Q37.5 41.6 37.7 40.5 L39.3 30.2 Q39.5 29.1 40.6 29.1 Z" fill="#5467e0"/></svg></div>

<div class="a" id="bpb"></div>
<div class="a" id="bp"></div>
<div class="a" id="sbb"></div>
<div class="a" id="sb"></div>

<div class="a" style="left:60px;top:1505px"><svg width="40" height="40" viewBox="0 0 40 40"><g fill="none" stroke="#6a6a6a" stroke-width="2.2"><path d="M15.3 16.5 A4.9 5 0 0 1 25.1 16.5"/><path d="M11.2 27 V21 C11.2 18.5 13 17.2 15.5 17.2 H25 C27.6 17.2 29.2 18.8 29.2 21.5 V23.5"/><path d="M11.2 26 C11.2 31 14 35 18.5 36.5"/><path d="M20.2 17.5 V24.5"/><path d="M7.3 18.3 L10.8 21.5 M7.3 33.2 L10.6 29.6 M32.8 18.3 L29.8 22.6"/></g><path d="M22.4 26.6 H33.2 M22.4 31 H33.2 M22.4 35.5 H33.2" stroke="#6a6a6a" stroke-width="2.6" stroke-linecap="round"/></svg></div>
<div class="a" style="left:107px;top:1516px;font-size:24px;line-height:28px;color:#111">调试信息</div>
<div class="a" style="left:245px;top:1517px"><svg width="30" height="22" viewBox="0 0 30 22"><path d="M3 2.2 H3.2 M3 10.6 H3.2 M3 19 H3.2" stroke="#6a6a6a" stroke-width="3.8" stroke-linecap="round"/><path d="M9.4 2.2 H27 M9.4 10.6 H27 M9.4 19 H27" stroke="#6a6a6a" stroke-width="3.6" stroke-linecap="round"/></svg></div>
<div class="a" style="left:291px;top:1516px;font-size:24px;line-height:28px;color:#111">问题</div>
<div class="a" style="left:320px;top:1487px;width:39px;height:35px;border-radius:18px;background:#e57370;border:2px solid #fff;color:#fff;font-size:24px;line-height:32px;text-align:center">2</div>

<div class="a" style="left:40px;top:1562px;font-size:24px;line-height:28px;color:#111">查看资源「自关联实体」详情</div>
<div class="a" style="left:2470px;top:1565px;width:20px;height:20px;border-radius:50%;background:#6aa673"></div>
<div class="a" style="left:2497px;top:1562px;font-size:24px;line-height:28px;color:#111">资源发生变更，点击查看,检查时间:16:46:28</div>
</body></html>
